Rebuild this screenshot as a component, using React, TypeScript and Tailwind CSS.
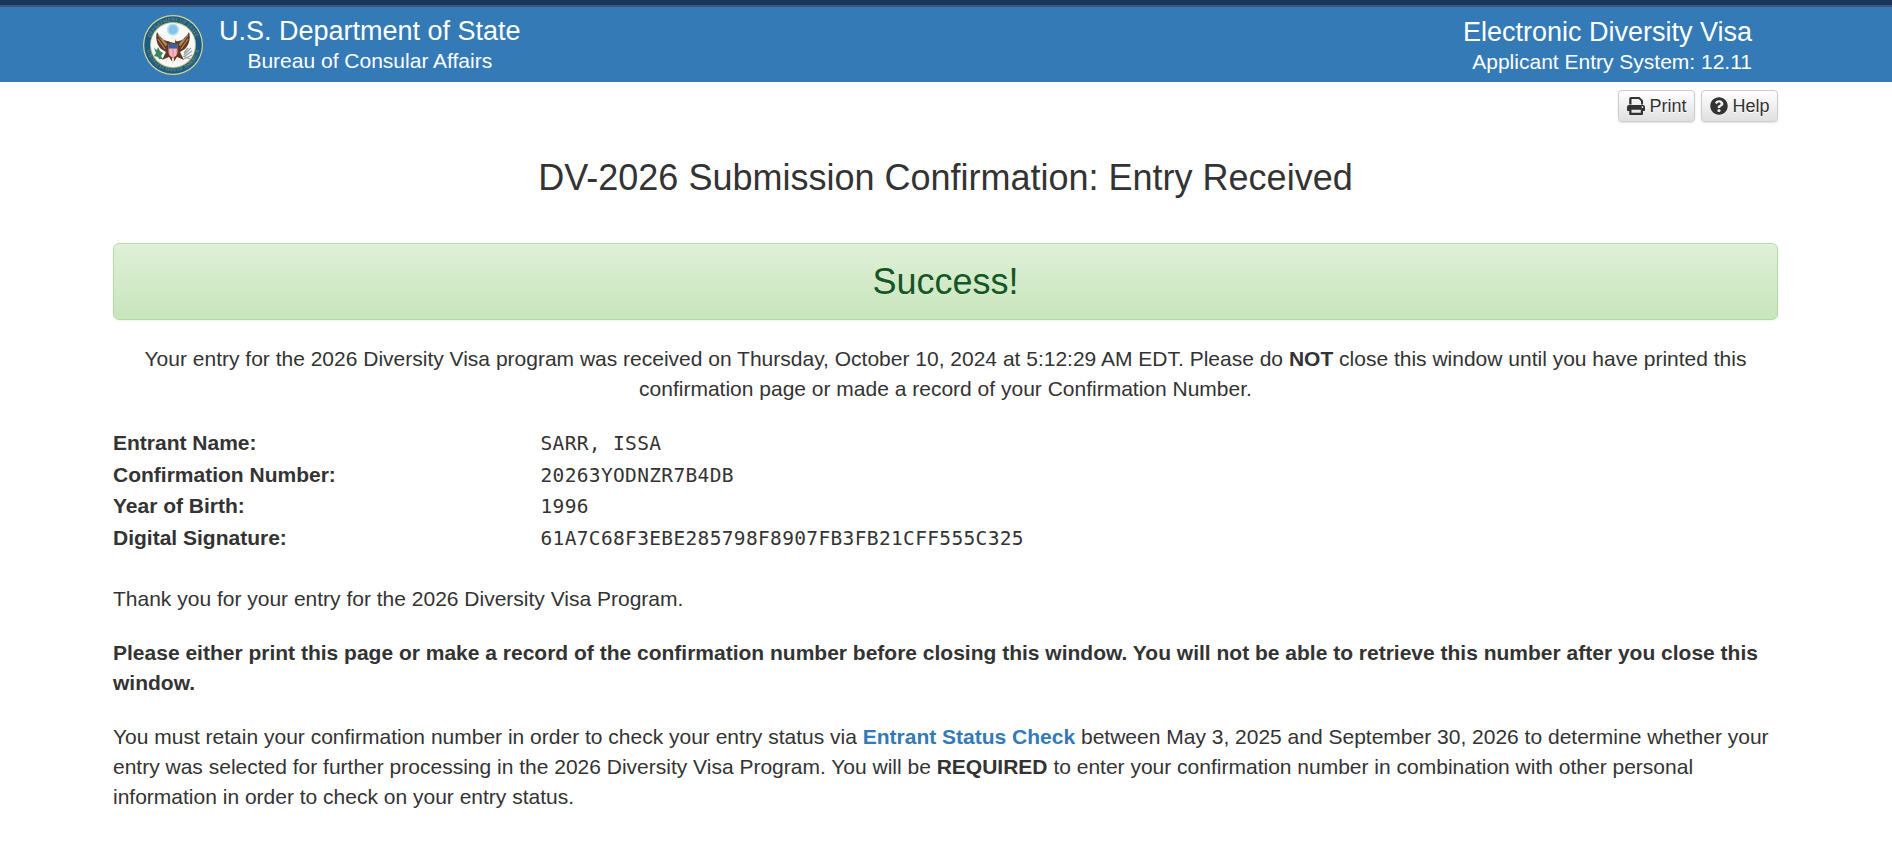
import React from "react";

function Seal() {
  return (
    <svg width="60" height="60" viewBox="0 0 60 60" className="block shrink-0">
      <defs>
        <path id="seal-top" d="M6.6 32 A23.5 23.5 0 1 1 53.4 32" />
        <path id="seal-bottom" d="M3.6 32 A26.5 26.5 0 0 0 56.4 32" />
      </defs>
      <circle cx="30" cy="30" r="30" fill="#d3d48e" />
      <circle cx="30" cy="30" r="28.800" fill="#1b5c86" />
      <circle cx="30" cy="30" r="22.900" fill="#c9cc8c" />
      <circle cx="30" cy="30" r="22" fill="#f8fafa" />
      <g fill="#8f9a68" className="font-['Liberation_Serif',serif] text-[5.2px]">
        <text><textPath href="#seal-top" startOffset="50%" textAnchor="middle">DEPARTMENT OF STATE</textPath></text>
        <text><textPath href="#seal-bottom" startOffset="50%" textAnchor="middle">UNITED STATES OF AMERICA</textPath></text>
      </g>
      <circle cx="30" cy="14.600" r="5.300" fill="#82c4ec" stroke="#b9ddf0" strokeWidth="1.600" />
      <path d="M27 26 C23 27 18 24 14 17 C12 23 14 30 18 34 L23 37 L19 45 L26 42 L30 48 L34 42 L41 45 L37 37 L42 34 C46 30 48 23 46 17 C42 24 37 27 33 26 L31 22 Z" fill="#64391f" />
      <path d="M15 20 L23 31 M15 24 L22 34 M45 20 L37 31 M45 24 L38 34 M19 24 L24 30 M41 24 L36 30" stroke="#b18a5d" strokeWidth="1.200" fill="none" />
      <path d="M26 43 L22 48 M30 43 V49 M34 43 L38 48" stroke="#f3eee4" strokeWidth="1.800" />
      <path d="M26.500 27 C25.500 21 31 19.500 32.500 23 L32 28 Z" fill="#f8f4ec" />
      <path d="M25.500 29.500 H34.500 V37.500 Q34 41 30 43 Q26 41 25.500 37.500 Z" fill="#ee9eaa" />
      <path d="M25.500 28.500 H34.500 V33.500 H25.500 Z" fill="#3f5f98" />
      <path d="M28 34 V41 M32 34 V41" stroke="#fbdadd" strokeWidth=".9" />
      <path d="M11 33 L14 35 L15 32 L17 36 L20 38 L18 41 L20 44 L16 44 L15 42 L11 41 L13 38 Z" fill="#3c8560" />
      <path d="M41 40 L48 33 M41 42 L49 36 M41 44 L49 40 M41 38 L45 33 M40 41 L47 44" stroke="#98a3a0" strokeWidth="1.300" />
    </svg>
  );
}

function PrintIcon() {
  return (
    <svg width="18" height="18" viewBox="0 0 18 18" className="block">
      <path fillRule="evenodd" fill="#333" d="M4 0 H12.500 L16 3.500 V7.500 H14 V4.300 L11.700 2 H4.500 V7.500 H2.200 V1.800 Q2.200 0 4 0 Z M2 8 H16 Q18 8 18 10 V13.300 Q18 14 17.300 14 H16 V17 Q16 18 15 18 H3.200 Q2.200 18 2.200 17 V14 H.7 Q0 14 0 13.300 V10 Q0 8 2 8 Z M4.500 12.800 V15.800 H13.800 V12.800 Z M15.400 9.300 A.8 .8 0 1 0 15.410 9.300 Z" />
    </svg>
  );
}

function HelpIcon() {
  return (
    <svg width="18" height="18" viewBox="0 0 512 512" className="block">
      <path fill="#333" d="M504 256c0 136.997-111.043 248-248 248S8 392.997 8 256C8 119.083 119.043 8 256 8s248 111.083 248 248zM262.655 90c-54.497 0-89.255 22.957-116.549 63.758-3.536 5.286-2.353 12.415 2.715 16.258l34.699 26.310c5.205 3.947 12.621 3.008 16.665-2.122 17.864-22.658 30.113-35.797 57.303-35.797 20.429 0 45.698 13.148 45.698 32.958 0 14.976-12.363 22.667-32.534 33.976C247.128 238.528 216 254.941 216 296v4c0 6.627 5.373 12 12 12h56c6.627 0 12-5.373 12-12v-1.333c0-28.462 83.186-29.647 83.186-106.667 0-58.002-60.165-102-116.531-102zM256 338c-25.365 0-46 20.635-46 46 0 25.364 20.635 46 46 46s46-20.636 46-46c0-25.365-20.635-46-46-46z" />
    </svg>
  );
}

function ToolButton({ icon, label }: { icon: React.ReactNode; label: string }) {
  return (
    <button
      type="button"
      className="flex h-8 w-[77px] items-center justify-center gap-1 rounded-[4px] border border-[#ccc] bg-gradient-to-b from-white to-[#e0e0e0] pl-px text-[18px] leading-none text-[#333] shadow-[inset_0_1px_0_rgba(255,255,255,.15),0_1px_2px_rgba(0,0,0,.12)] [text-shadow:0_1px_0_#fff]"
    >
      {icon}
      <span>{label}</span>
    </button>
  );
}

const details = [
  ["Entrant Name:", "SARR, ISSA"],
  ["Confirmation Number:", "20263YODNZR7B4DB"],
  ["Year of Birth:", "1996"],
  ["Digital Signature:", "61A7C68F3EBE285798F8907FB3FB21CFF555C325"],
];

export default function App() {
  return (
    <div className="h-[842px] overflow-hidden bg-white font-['Liberation_Sans',Arial,sans-serif] text-[21px] leading-[30px] text-[#333]">
      <header className="h-[82px] border-t-[5px] border-[#19355e] bg-[#337ab7] text-white">
        <div className="h-[2px] bg-[#3e5478]" />
        <div className="ml-[143px] flex w-[1609px] justify-between">
          <div className="flex">
            <div className="pt-2"><Seal /></div>
            <div className="ml-4 pt-2 text-center">
              <div className="text-[27px] leading-[32px]">U.S. Department of State</div>
              <div className="text-[21px] leading-[28px]">Bureau of Consular Affairs</div>
            </div>
          </div>
          <div className="pt-[9px] text-right">
            <div className="text-[27px] leading-[32px]">Electronic Diversity Visa</div>
            <div className="text-[21px] leading-[28px]">Applicant Entry System: 12.11</div>
          </div>
        </div>
      </header>

      <main className="ml-[113px] w-[1665px]">
        <div className="flex justify-end gap-[6px] pt-2">
          <ToolButton icon={<PrintIcon />} label="Print" />
          <ToolButton icon={<HelpIcon />} label="Help" />
        </div>

        <h1 className="mt-[36px] text-center text-[36px] leading-[40px]">DV-2026 Submission Confirmation: Entry Received</h1>

        <div className="mt-[45px] flex h-[77px] items-center justify-center rounded-[6px] border border-[#b2dba1] bg-gradient-to-b from-[#dff0d8] to-[#c8e5bc] text-[36px] text-[#155724] shadow-[inset_0_1px_0_rgba(255,255,255,.25),0_1px_2px_rgba(0,0,0,.05)] [text-shadow:0_1px_0_rgba(255,255,255,.2)]">
          Success!
        </div>

        <p className="mt-[24px] text-center">
          Your entry for the 2026 Diversity Visa program was received on Thursday, October 10, 2024 at 5:12:29 AM EDT. Please do <b>NOT</b> close this window until you have printed this<br />
          confirmation page or made a record of your Confirmation Number.
        </p>

        <dl className="mt-[23px]">
          {details.map(([label, value]) => (
            <div key={label} className="flex h-[31.7px] items-center">
              <dt className="w-[427.500px] font-bold">{label}</dt>
              <dd className="pt-[2px] font-['DejaVu_Sans_Mono',monospace] text-[19.5px] tracking-[0.345px]">{value}</dd>
            </div>
          ))}
        </dl>

        <p className="mt-[30px]">Thank you for your entry for the 2026 Diversity Visa Program.</p>
        <p className="mt-6 font-bold">
          Please either print this page or make a record of the confirmation number before closing this window. You will not be able to retrieve this number after you close this<br />
          window.
        </p>
        <p className="mt-6">
          You must retain your confirmation number in order to check your entry status via <a className="text-[#337ab7]"><b>Entrant Status Check</b></a> between May 3, 2025 and September 30, 2026 to determine whether your<br />
          entry was selected for further processing in the 2026 Diversity Visa Program. You will be <b>REQUIRED</b> to enter your confirmation number in combination with other personal<br />
          information in order to check on your entry status.
        </p>
      </main>
    </div>
  );
}
